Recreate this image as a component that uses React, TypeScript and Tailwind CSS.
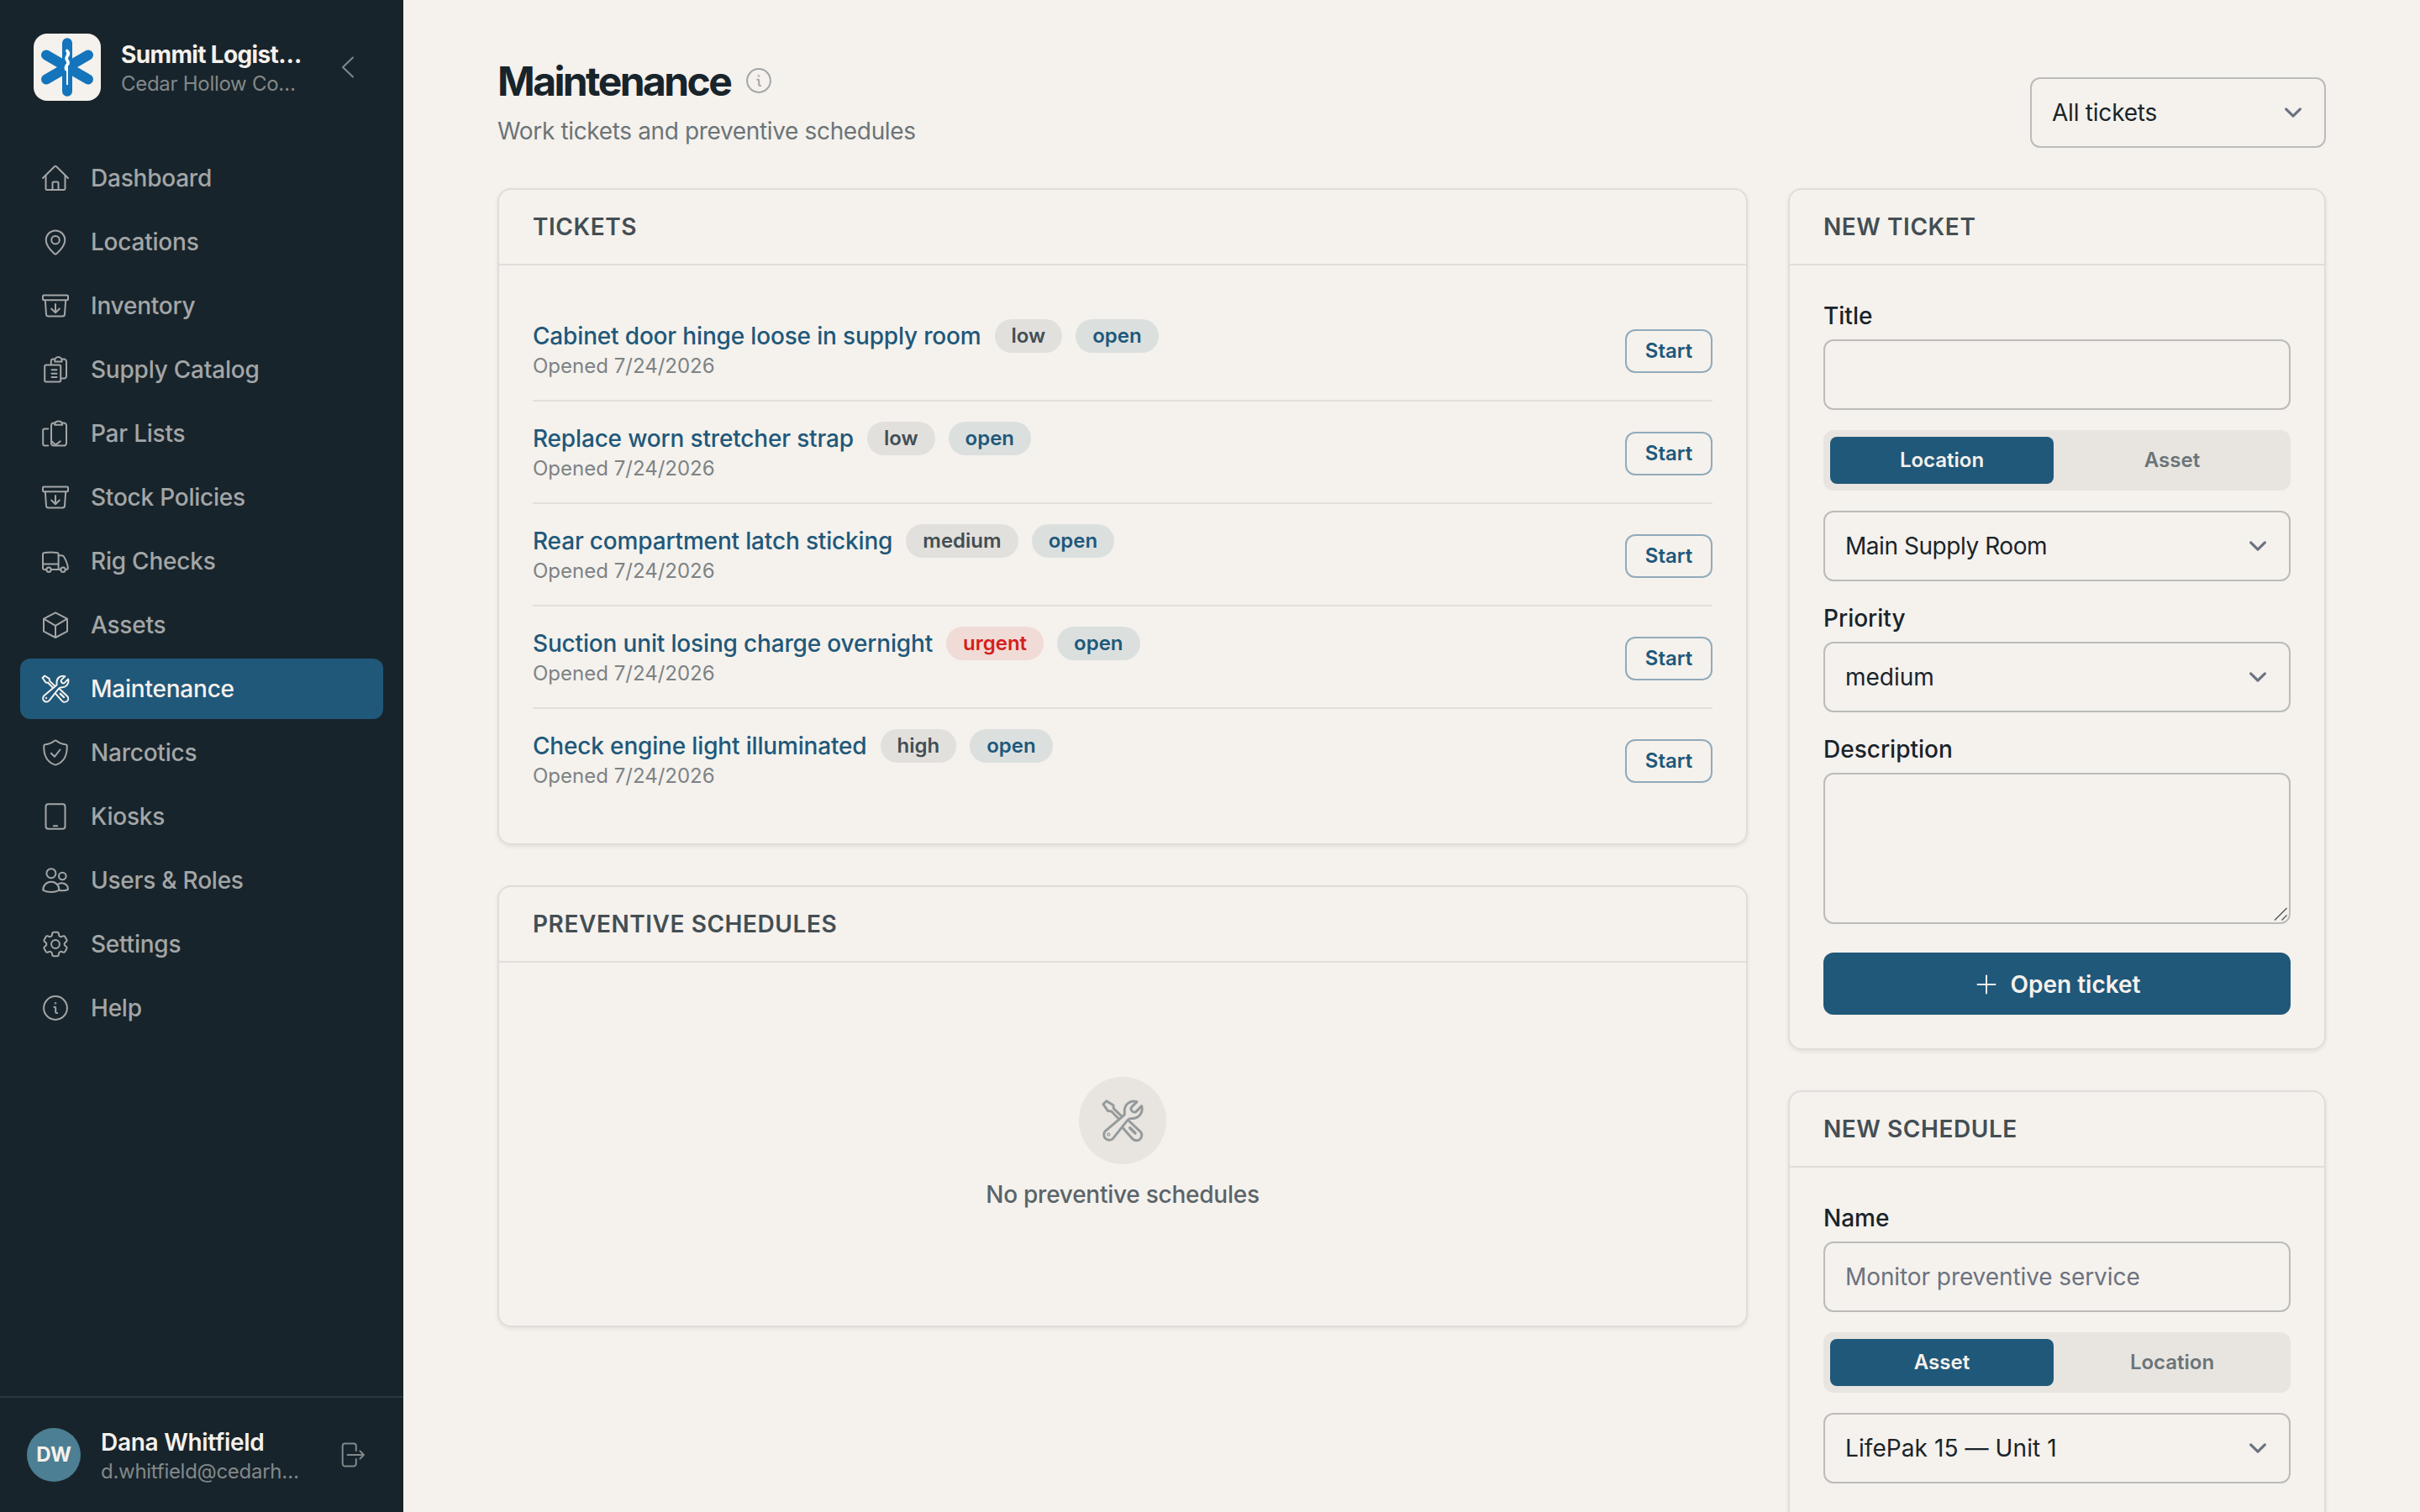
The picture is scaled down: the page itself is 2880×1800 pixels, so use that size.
import type { ReactNode } from "react";

const Icon = ({ children, className = "size-9" }: { children: ReactNode; className?: string }) => (
  <svg
    xmlns="http://www.w3.org/2000/svg"
    className={`shrink-0 ${className}`}
    viewBox="0 0 36 36"
    fill="none"
    stroke="currentColor"
    strokeWidth="2"
    strokeLinecap="round"
    strokeLinejoin="round"
  >
    {children}
  </svg>
);

const homeIcon = (
  <>
    <path d="M3 18 16.9 4.2a1.6 1.6 0 0 1 2.2 0L33 18" />
    <path d="M6.5 15v15.5A1.5 1.5 0 0 0 8 32h20a1.5 1.5 0 0 0 1.5-1.5V15" />
    <path d="M14.5 32v-8a1.5 1.5 0 0 1 1.5-1.5h4a1.5 1.5 0 0 1 1.5 1.5v8" />
  </>
);

const pinIcon = (
  <>
    <path d="M29.3 15.7c0 6.3-5.6 12.3-9.7 16.1a2.3 2.3 0 0 1-3.2 0C12.3 28 6.7 22 6.7 15.7a11.3 11.3 0 0 1 22.6 0z" />
    <circle cx="18" cy="15.7" r="4.8" />
  </>
);

const archiveIcon = (
  <>
    <rect x="3" y="5.4" width="30" height="5.8" rx="1" />
    <path d="m5.8 11.2 1.2 17a2.5 2.5 0 0 0 2.5 2.3h17a2.5 2.5 0 0 0 2.5-2.3l1.2-17" />
    <path d="M18 16v10M13.2 21.5 18 26.2l4.8-4.7" />
  </>
);

const catalogIcon = (
  <>
    <rect x="5.2" y="12.4" width="19" height="20.2" rx="1.5" />
    <path d="M13.5 18.3h6M13.5 22.7h6M13.5 27h6" />
    <path d="M12.8 12V8a2.4 2.4 0 0 1 2.4-2.4h2M25.6 5.6h2.6A2.8 2.8 0 0 1 31 8.4v17.3a2.8 2.8 0 0 1-2.8 2.8h-3.6" />
    <path d="M17.2 8.4V7.2a4.2 4.2 0 0 1 8.4 0v1.2z" />
  </>
);

const parIcon = (
  <>
    <path d="M9.3 12.4H5a1.8 1.8 0 0 0-1.8 1.8v16.5A1.8 1.8 0 0 0 5 32.5h4.3" />
    <path d="M17 5.6h-1a3 3 0 0 0-3 3v21a3 3 0 0 0 3 3h12a3 3 0 0 0 3-3v-21a3 3 0 0 0-3-3h-1.5" />
    <path d="M17 7.8c0-2.8 2-4.4 4.6-4.4s4.6 1.6 4.6 4.4z" />
    <path d="m13.4 27.3 4.8 4.3 5.6-4.3" />
  </>
);

const truckIcon = (
  <>
    <path d="M7.2 28H4.5A1.5 1.5 0 0 1 3 26.5V10a2 2 0 0 1 1.8-2c5.5-.7 9.5-.7 15 0a2 2 0 0 1 1.8 2v18M24.2 28H12.8M3 21.4h18.6" />
    <path d="M21.6 11.2H25c1.5 0 2.6.6 3.3 1.9 2.6 4.7 4.5 8.5 4.5 13.2 0 1-.7 1.7-1.7 1.7h-1.3" />
    <circle cx="10" cy="28.2" r="2.7" />
    <circle cx="27" cy="28.2" r="2.7" />
  </>
);

const cubeIcon = <path d="m18 3.3 14 7.4v15L18 33 4 25.7v-15zM4 10.7l14 8.2 14-8.2M18 18.9V33" />;

const toolsIcon = (
  <>
    <path d="M29.4 3.1C24.3 1.5 19.5 5 19.5 10.2v3.2L4.4 26.2a4.3 4.3 0 0 0-.1 6 4.3 4.3 0 0 0 6.2-.1L22 17.6c1-1.1 2-1.3 3.6-1.3 5.4 0 9-4.9 7.5-9.9l-4 4.2c-1.1 1.1-2.6.9-3.6-.1s-1.2-2.3-.2-3.4z" />
    <path d="m15.3 17-6.2-6.3-2.7-.3L2.6 5l2.6-2.5 5.4 3.4.4 2.7 6.4 6.2" />
    <path d="m22.7 18 9.3 8.7a4.2 4.2 0 0 1-6 5.9l-8-9" />
    <path d="m23.8 23.8 4.2 4.2" strokeWidth="2.4" />
    <circle cx="6.9" cy="29.1" r=".4" />
  </>
);

const shieldIcon = (
  <>
    <path d="M16.7 4.1a2 2 0 0 1 2.6 0c3.2 2.7 6.3 3.9 10.5 4.1 1.1 0 1.9.8 1.9 1.9.4 10.5-2.9 18.3-12.2 22a3.5 3.5 0 0 1-3 0C7.2 28.4 3.9 20.6 4.3 10.1c0-1.1.8-1.9 1.9-1.9 4.2-.2 7.300-1.4 10.500-4.1z" />
    <path d="m12.9 18.8 4 4 6.6-8.3" />
  </>
);

const kioskIcon = (
  <>
    <rect x="6.5" y="3.2" width="23" height="29.6" rx="3" />
    <path d="M15.8 29.3h4.4" />
  </>
);

const usersIcon = (
  <>
    <circle cx="12.9" cy="9.7" r="5.5" />
    <circle cx="26.3" cy="13" r="4.3" />
    <path d="M3.4 29.8c-.6-5.4 4-10 9.5-10s10 4.6 9.4 10c-5.6 2.8-13.3 2.8-18.9 0z" />
    <path d="M20.5 23c4.5-3.7 13-1 12.4 6-3.3 1.4-7 1.6-10.6 1" />
  </>
);

const gearIcon = (
  <g transform="translate(-1 -1) scale(1.583)" strokeWidth="1.26">
    <path d="M9.594 3.94c.09-.542.56-.94 1.11-.94h2.593c.55 0 1.02.398 1.11.94l.213 1.281c.063.374.313.686.645.87.074.04.147.083.22.127.325.196.72.257 1.075.124l1.217-.456a1.125 1.125 0 0 1 1.37.49l1.296 2.247a1.125 1.125 0 0 1-.26 1.431l-1.003.827c-.293.241-.438.613-.43.992a7.723 7.723 0 0 1 0 .255c-.008.378.137.75.43.991l1.004.827c.424.35.534.955.26 1.43l-1.298 2.247a1.125 1.125 0 0 1-1.369.491l-1.217-.456c-.355-.133-.75-.072-1.076.124a6.47 6.47 0 0 1-.22.128c-.331.183-.581.495-.644.869l-.213 1.281c-.09.543-.56.94-1.11.94h-2.594c-.55 0-1.019-.398-1.11-.94l-.213-1.281c-.062-.374-.312-.686-.644-.87a6.52 6.52 0 0 1-.22-.127c-.325-.196-.72-.257-1.076-.124l-1.217.456a1.125 1.125 0 0 1-1.369-.49l-1.297-2.247a1.125 1.125 0 0 1 .26-1.431l1.004-.827c.292-.24.437-.613.43-.991a6.932 6.932 0 0 1 0-.255c.007-.38-.138-.751-.43-.992l-1.004-.827a1.125 1.125 0 0 1-.26-1.43l1.297-2.247a1.125 1.125 0 0 1 1.37-.491l1.216.456c.356.133.751.072 1.076-.124.072-.044.146-.086.22-.128.332-.183.582-.495.644-.869l.214-1.28Z" />
    <circle cx="12" cy="12" r="3.1" />
  </g>
);

const infoIcon = (
  <>
    <circle cx="18" cy="18" r="13.9" />
    <path d="M16.3 16.8h.7a1.2 1.2 0 0 1 1.2 1.2v4.7a1.2 1.2 0 0 0 1.2 1.2h.7" />
    <circle cx="18" cy="12.3" r=".4" />
  </>
);

const navItems = [
  { label: "Dashboard", icon: homeIcon },
  { label: "Locations", icon: pinIcon },
  { label: "Inventory", icon: archiveIcon },
  { label: "Supply Catalog", icon: catalogIcon },
  { label: "Par Lists", icon: parIcon },
  { label: "Stock Policies", icon: archiveIcon },
  { label: "Rig Checks", icon: truckIcon },
  { label: "Assets", icon: cubeIcon },
  { label: "Maintenance", icon: toolsIcon, active: true },
  { label: "Narcotics", icon: shieldIcon },
  { label: "Kiosks", icon: kioskIcon },
  { label: "Users & Roles", icon: usersIcon },
  { label: "Settings", icon: gearIcon },
  { label: "Help", icon: infoIcon },
];

const tickets = [
  { title: "Cabinet door hinge loose in supply room", priority: "low" },
  { title: "Replace worn stretcher strap", priority: "low" },
  { title: "Rear compartment latch sticking", priority: "medium" },
  { title: "Suction unit losing charge overnight", priority: "urgent" },
  { title: "Check engine light illuminated", priority: "high" },
];

const Logo = () => (
  <svg className="size-20 shrink-0 rounded-2xl bg-[#f5f1ec]" viewBox="0 0 80 80" fill="none" strokeLinecap="round">
    <path d="M40 11.3v57.5M15 25.5l50 29M65 25.5l-50 29" stroke="#1475bc" strokeWidth="12" />
    <path d="M40 20v41" stroke="#fff" strokeWidth="2" strokeLinecap="butt" />
    <path
      d="M39.8 20.5c1.8 1.8 2.2 3.4.9 5.5s-2.7 3.5-1 5.5 2.3 3.6.4 5.6-2 3.8-1.4 5.4"
      stroke="#fff"
      strokeWidth="3.6"
    />
  </svg>
);

const Sidebar = () => (
  <aside className="flex h-full w-[480px] shrink-0 flex-col bg-[#18242b]">
    <div className="flex h-40 items-center gap-6 pl-10 pr-12">
      <Logo />
      <div className="min-w-0 flex-1 pt-0.5">
        <div className="whitespace-nowrap text-[28px] font-bold leading-9 tracking-[-0.023em] text-[#f5f1ec]">Summit Logist…</div>
        <div className="mt-px whitespace-nowrap text-2xl leading-8 tracking-[-0.012em] text-[#82888a]">Cedar Hollow Co…</div>
      </div>
      <button>
        <svg className="size-8" viewBox="0 0 32 32" fill="none" stroke="#82888a" strokeWidth="2" strokeLinecap="round" strokeLinejoin="round">
          <path d="M20 4.5 8 16l12 11.5" />
        </svg>
      </button>
    </div>

    <nav className="flex flex-1 flex-col gap-1 px-6 pt-4">
      {navItems.map((item) => (
        <a
          key={item.label}
          className={`flex h-[72px] items-center gap-6 rounded-xl px-6 text-[28px] font-[550] tracking-[-0.008em] ${
            item.active ? "bg-[#20587a] text-[#f5f1ec]" : "text-[#a3a6a7]"
          }`}
        >
          <Icon>{item.icon}</Icon>
          {item.label}
        </a>
      ))}
    </nav>

    <div className="flex h-[138px] items-center gap-6 border-t-2 border-[#2c373e] pl-8 pr-11">
      <div className="flex size-16 shrink-0 items-center justify-center rounded-full bg-[#4c7f93] text-2xl font-bold text-[#f5f1ec]">
        DW
      </div>
      <div className="min-w-0 flex-1 pt-0.5">
        <div className="whitespace-nowrap text-[28px] font-semibold leading-9 tracking-[-0.01em] text-[#f5f1ec]">Dana Whitfield</div>
        <div className="mt-px whitespace-nowrap text-2xl leading-8 tracking-[-0.012em] text-[#82888a]">d.whitfield@cedarh…</div>
      </div>
      <button>
        <svg className="size-8" viewBox="0 0 32 32" fill="none" stroke="#82888a" strokeWidth="2" strokeLinecap="round" strokeLinejoin="round">
          <path d="M19.8 11V5.5a3 3 0 0 0-3-3H6.7a3 3 0 0 0-3 3v21a3 3 0 0 0 3 3h10.1a3 3 0 0 0 3-3V21" />
          <path d="M9.5 16H29M24.5 11.5 29 16l-4.5 4.5" />
        </svg>
      </button>
    </div>
  </aside>
);

const Card = ({ title, children }: { title: string; children: ReactNode }) => (
  <section className="rounded-2xl border-2 border-[#dfddd9] shadow-[0_2px_5px_rgba(24,36,43,0.08)]">
    <h2 className="flex h-[90px] items-center border-b-2 border-[#dfddd9] px-10 text-[28px] font-semibold uppercase tracking-[0.02em] text-[#434e54]">
      {title}
    </h2>
    {children}
  </section>
);

const Badge = ({ children, tone }: { children: ReactNode; tone: string }) => (
  <span
    className={`flex h-10 items-center rounded-full px-5 text-2xl font-semibold ${
      tone === "urgent"
        ? "bg-[#f1dbd6] text-[#d4201c]"
        : tone === "open"
          ? "bg-[#dbe0df] text-[#20587a]"
          : "bg-[#e2e0dc] text-[#434e54]"
    }`}
  >
    {children}
  </span>
);

const Label = ({ children }: { children: ReactNode }) => (
  <span className="mb-2 block text-[28px] font-medium leading-10 text-[#18242b]">{children}</span>
);

const Select = ({ value, className = "tracking-[-0.008em]" }: { value: string; className?: string }) => (
  <div className="relative">
    <select
      className={`h-[84px] w-full appearance-none rounded-xl border-2 border-[#bbbcba] bg-transparent px-6 text-[28px] text-[#18242b] ${className}`}
    >
      <option>{value}</option>
    </select>
    <svg
      className="pointer-events-none absolute right-[18px] top-[21px] size-[42px]"
      viewBox="0 0 20 20"
      fill="none"
      stroke="#6b7280"
      strokeWidth="1.5"
      strokeLinecap="round"
      strokeLinejoin="round"
    >
      <path d="m6 8 4 4 4-4" />
    </svg>
  </div>
);

const Input = ({ placeholder }: { placeholder?: string }) => (
  <input
    placeholder={placeholder}
    className="block h-[84px] w-full rounded-xl border-2 border-[#bbbcba] bg-transparent px-6 text-[28px] tracking-[-0.003em] placeholder:text-[#6b7280]"
  />
);

const Segmented = ({ options }: { options: string[] }) => (
  <div className="grid grid-cols-2 gap-2 rounded-xl bg-[#e8e5e0] p-2">
    {options.map((option, i) => (
      <button
        key={option}
        className={`h-14 rounded-lg text-2xl font-semibold ${i === 0 ? "bg-[#20587a] text-[#f5f1ec]" : "text-[#6b7478]"}`}
      >
        {option}
      </button>
    ))}
  </div>
);

const App = () => {
  return (
    <div className="flex h-[1800px] w-full overflow-hidden bg-[#f5f1ec] font-[Inter,sans-serif] text-[#18242b]">
      <Sidebar />

      <main className="flex-1 overflow-hidden px-28 pt-16">
        {/* Page header */}
        <div className="flex items-end justify-between">
          <div>
            <div className="flex h-16 items-center gap-4">
              <h1 className="pt-0.5 text-5xl font-bold leading-[64px] tracking-[-0.054em]">Maintenance</h1>
              <Icon className="size-9 text-[#a3a6a7]">{infoIcon}</Icon>
            </div>
            <p className="mt-2 text-[28px] leading-10 tracking-[-0.0125em] text-[#6b7478]">Work tickets and preventive schedules</p>
          </div>
          <div className="w-[352px]">
            <Select value="All tickets" />
          </div>
        </div>

        <div className="mt-12 grid grid-cols-[1fr_640px] items-start gap-12">
          <div className="flex flex-col gap-12">
            <Card title="Tickets">
              <ul className="divide-y-2 divide-[#e2e0dc] p-10">
                {tickets.map((ticket) => (
                  <li key={ticket.title} className="flex items-center justify-between pb-5 pt-6">
                    <div className="h-[76px]">
                      <div className="flex items-center gap-4">
                        <a className="text-[28px] font-medium leading-10 tracking-[-0.006em] text-[#20587a]">{ticket.title}</a>
                        <Badge tone={ticket.priority}>{ticket.priority}</Badge>
                        <Badge tone="open">open</Badge>
                      </div>
                      <div className="text-2xl leading-8 text-[#7c8386]">Opened 7/24/2026</div>
                    </div>
                    <button className="h-[52px] w-[104px] rounded-xl border-2 border-[#90abbb] text-2xl font-semibold text-[#20587a]">
                      Start
                    </button>
                  </li>
                ))}
              </ul>
            </Card>

            <Card title="Preventive schedules">
              <div className="flex h-[432px] flex-col items-center pt-[136px]">
                <div className="flex size-[104px] items-center justify-center rounded-full bg-[#e8e5e0] text-[#959a9b]">
                  <Icon className="size-[54px]">{toolsIcon}</Icon>
                </div>
                <p className="mt-4 text-[28px] font-medium leading-10 tracking-[-0.009em] text-[#5a6469]">No preventive schedules</p>
              </div>
            </Card>
          </div>

          <div className="flex flex-col gap-12">
            <Card title="New ticket">
              <div className="flex flex-col gap-6 p-10">
                <label>
                  <Label>Title</Label>
                  <Input />
                </label>
                <Segmented options={["Location", "Asset"]} />
                <Select value="Main Supply Room" className="tracking-[-0.016em]" />
                <label>
                  <Label>Priority</Label>
                  <Select value="medium" className="tracking-normal" />
                </label>
                <label className="relative">
                  <Label>Description</Label>
                  <textarea className="block h-[180px] w-full resize-none rounded-xl border-2 border-[#bbbcba] bg-transparent px-6 py-5 text-[28px]" />
                  {/* Resize grip */}
                  <svg className="absolute bottom-1 right-1 size-4" viewBox="0 0 16 16" stroke="#4b5052" strokeWidth="1.2">
                    <path d="M1 15.5 15.5 1M9.5 15.5l6-6" />
                  </svg>
                </label>
                <button className="mt-2.5 flex h-[74px] items-center justify-center gap-3 rounded-xl bg-[#20587a] pt-px text-[28px] font-semibold text-[#f5f1ec]">
                  <svg className="size-8" viewBox="0 0 32 32" fill="none" stroke="currentColor" strokeWidth="2" strokeLinecap="round">
                    <path d="M16 5.5v21M5.5 16h21" />
                  </svg>
                  Open ticket
                </button>
              </div>
            </Card>

            <Card title="New schedule">
              <div className="flex flex-col gap-6 p-10 pb-24">
                <label>
                  <Label>Name</Label>
                  <Input placeholder="Monitor preventive service" />
                </label>
                <Segmented options={["Asset", "Location"]} />
                <Select value="LifePak 15 — Unit 1" className="tracking-[0.003em]" />
              </div>
            </Card>
          </div>
        </div>
      </main>
    </div>
  );
};

export default App;
